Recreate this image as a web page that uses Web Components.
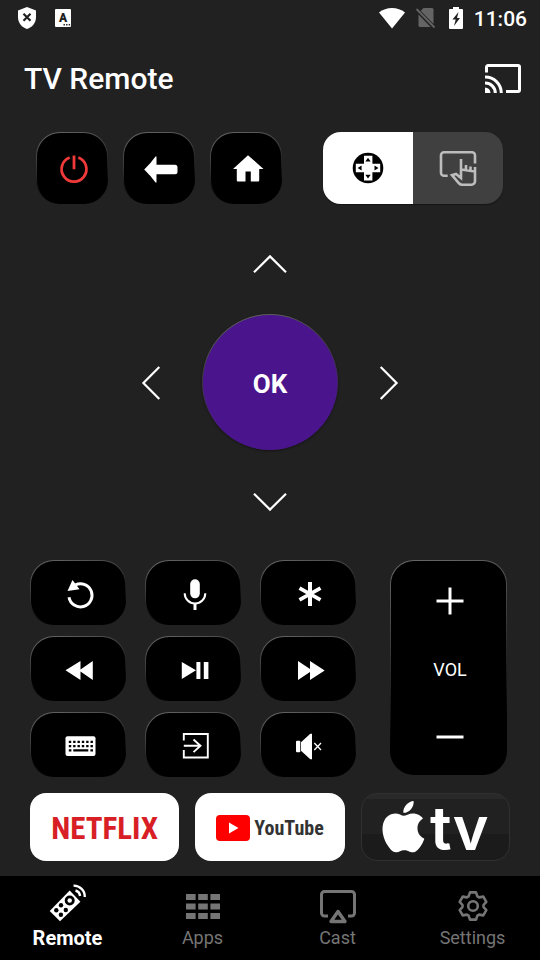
<!DOCTYPE html>
<html lang="en">
<head>
<meta charset="utf-8">
<meta name="viewport" content="width=device-width, initial-scale=1">
<title>TV Remote</title>
<style>
  body { margin: 0; background: #212121; color: #fff; font-family: Roboto, "Liberation Sans", sans-serif; }
</style>
</head>
<body>
<remote-app></remote-app>
<script>
const gear = () => {
  const tooth = [[-4.4, -9.6], [-3, -13.6], [3, -13.6], [4.4, -9.6]];
  const pts = [];
  for (let i = 0; i < 6; i++) {
    const a = i * Math.PI / 3, c = Math.cos(a), s = Math.sin(a);
    for (const [x, y] of tooth) pts.push(`${(16 + x * c - y * s).toFixed(1)} ${(16 + x * s + y * c).toFixed(1)}`);
  }
  return `M${pts.join('L')}Z`;
};

/* name: [width, height, markup] */
const ICONS = {
  shield: [18, 22, '<path fill="currentColor" d="M9 0 18 3.500V10c0 6-4 10.500-9 12-5-1.500-9-6-9-12V3.500z"/><path d="M5.500 6.800l7 7m0-7-7 7" stroke="#212121" stroke-width="2.200"/>'],
  keyboardLang: [16, 18, '<rect width="16" height="18" rx="1" fill="currentColor"/><text x="8" y="13" text-anchor="middle" font-family="Roboto" font-weight="900" font-size="12" fill="#212121">A</text><path d="M8.500 15.800h7" stroke="#212121" stroke-width="1.400" stroke-dasharray="1.400 1.200"/>'],
  wifi: [26, 20, '<path fill="currentColor" d="M0 4.500C7-1.500 19-1.500 26 4.500L13 20.500z"/>'],
  noSim: [22, 20, '<path fill="#646464" d="M7.500 0H16a1.500 1.500 0 0 1 1.500 1.500V19H4a1.500 1.500 0 0 1-1.500-1.500V5z"/><path d="M.5 1.500 18.500 20" stroke="#212121" stroke-width="4"/><path d="M.5 1 18.500 19.500" stroke="#646464" stroke-width="1.800"/>'],
  battery: [14, 22, '<path fill="currentColor" d="M4 0h6v2h3a1 1 0 0 1 1 1v18a1 1 0 0 1-1 1H1a1 1 0 0 1-1-1V3a1 1 0 0 1 1-1h3z"/><path fill="#212121" d="M9.500 5 3.500 12.500h3.200L5 19l6-8H8z"/>'],
  screencast: [36, 29, '<path d="M1.500 8.500V3a1.500 1.500 0 0 1 1.500-1.500h30A1.500 1.500 0 0 1 34.500 3v23a1.500 1.500 0 0 1-1.500 1.500H21M0 13a16 16 0 0 1 16.300 16M0 19a10 10 0 0 1 10.300 10" fill="none" stroke="currentColor" stroke-width="3"/><path fill="currentColor" d="M0 23.500A5.500 5.500 0 0 1 5.500 29H0z"/>'],
  power: [36, 36, '<path d="M13.700 6.500a12.400 12.400 0 1 0 8.600 0M18 4.500V18.300" fill="none" stroke="#f03a3a" stroke-width="2.800"/>'],
  back: [36, 36, '<path fill="currentColor" d="M1.200 18.500Q8 12 12.500 5.500h1v8.300h18.500a2.500 2.500 0 0 1 2.500 2.500v4.400a2.500 2.500 0 0 1-2.500 2.500H13.500v8.300h-1Q8 25 1.200 18.500z"/>'],
  home: [36, 36, '<path fill="currentColor" d="M18 4.200 33.500 18H29.200v11.500a1 1 0 0 1-1 1h-7.400v-10h-5.300v10H7.800a1 1 0 0 1-1-1V18H3z"/>'],
  gamepad: [36, 36, '<circle cx="18" cy="18" r="15.300" fill="#000"/><path fill="#fff" d="M14 5.700h8.400v8h7.800v8.600h-7.800v8.200H14v-8.200H5.800v-8.600H14z"/><path fill="#000" d="M18 7.700l2.700 3.800h-5.400zM18 28.500l2.700-3.800h-5.400zM7.600 18l4-2.600v5.200zM28.500 18l-4-2.600v5.200z"/>'],
  touch: [36, 36, '<path d="M35 13.500V5.300a3 3 0 0 0-3-3H4a3 3 0 0 0-3 3v17.400a3 3 0 0 0 3 3h3.700M21 9v19l-5-4-4 1.200 7.200 8.300a4 4 0 0 0 2.800 1.200h9.500a3.500 3.500 0 0 0 3.500-3.500V17M21 19.500l14 2M26 15v4.500M30.500 16.500v4" fill="none" stroke="currentColor" stroke-width="2.600"/>'],
  up: [34, 18, '<path d="M1 17.300 17 1.400 33 17.300" fill="none" stroke="currentColor" stroke-width="2.200"/>'],
  down: [34, 18, '<path d="M1 .7 17 16.600 33 .7" fill="none" stroke="currentColor" stroke-width="2.200"/>'],
  left: [18, 34, '<path d="M17.300 1 1.400 17l15.900 16" fill="none" stroke="currentColor" stroke-width="2.200"/>'],
  right: [18, 34, '<path d="M.7 1l15.900 16L.7 33" fill="none" stroke="currentColor" stroke-width="2.200"/>'],
  replay: [36, 36, '<path d="M13.500 8.800A11.600 11.600 0 1 1 7 21.300" fill="none" stroke="currentColor" stroke-width="3"/><path fill="currentColor" d="M10.500 4 17.500 13.300 5.500 15z"/>'],
  mic: [36, 36, '<rect x="13.200" y="3.300" width="9.600" height="19" rx="4.800" fill="currentColor"/><path d="M7.700 17.300a10.300 10.300 0 0 0 20.600 0" fill="none" stroke="currentColor" stroke-width="2"/><path d="M18 27.500V34" stroke="currentColor" stroke-width="3"/>'],
  star: [36, 36, '<path d="M18 6v24" stroke="currentColor" stroke-width="4"/><path d="M7.500 12.200l21 11.600m0-11.600-21 11.600" stroke="currentColor" stroke-width="3.800"/>'],
  rewind: [36, 36, '<path fill="currentColor" d="M3.500 18.300 18.500 9v8.500L30.800 9v19L18.500 19.500V28z"/>'],
  playPause: [36, 36, '<path fill="currentColor" d="M4.800 10 19 18.300 4.800 27zM19.400 10h4v17h-4zM26.800 10h4.600v17h-4.600z"/>'],
  forward: [36, 36, '<path fill="currentColor" d="M32.700 18.500 18 9v8L6 9v19l12-8v8z"/>'],
  keyboard: [36, 36, '<rect x="3.500" y="8.300" width="30" height="19.700" rx="2" fill="currentColor"/><path d="M6.800 13.800h24.200M6.800 18.200h24.200" stroke="#000" stroke-width="2.200" stroke-dasharray="2.400 1.940"/><path d="M6.800 22.400h2.600M11.300 22.400h15M28.400 22.400H31" stroke="#000" stroke-width="2.200"/>'],
  input: [36, 36, '<path d="M6.800 12.500V6h24v23.500h-24V22M6.800 17.800h17M16.500 11.500l7 6.300-7 6.300" fill="none" stroke="currentColor" stroke-width="1.900"/>'],
  mute: [36, 36, '<rect x="4" y="12.700" width="4.300" height="11.500" rx="1" fill="currentColor"/><path fill="currentColor" d="M9 14.200 18.300 5.700H20v25.600h-1.700L9 22.700z"/><path d="M22.300 15l6.700 7m0-7-6.700 7" stroke="currentColor" stroke-width="1.300"/>'],
  plus: [28, 28, '<path d="M14 .5v27M.5 14h27" stroke="currentColor" stroke-width="3"/>'],
  minus: [28, 28, '<path d="M.5 14h27" stroke="currentColor" stroke-width="3"/>'],
  youtube: [34, 26, '<rect width="34" height="26" rx="4" fill="#f00"/><path fill="#fff" d="M13 7.500 22.500 13 13 18.500z"/>'],
  apple: [44, 55, '<path fill="currentColor" transform="scale(2.140) translate(-2 0)" d="M12.152 6.896c-.948 0-2.415-1.078-3.960-1.040-2.040.027-3.910 1.183-4.961 3.014-2.117 3.675-.546 9.103 1.519 12.090 1.013 1.454 2.208 3.090 3.792 3.039 1.520-.065 2.090-.987 3.935-.987 1.831 0 2.350.987 3.960.948 1.637-.026 2.676-1.480 3.676-2.948 1.156-1.688 1.636-3.325 1.662-3.415-.039-.013-3.182-1.221-3.220-4.857-.026-3.040 2.480-4.494 2.597-4.559-1.429-2.090-3.623-2.324-4.390-2.376-2-.156-3.675 1.090-4.610 1.090zM15.530 3.830c.843-1.012 1.400-2.427 1.245-3.830-1.207.052-2.662.805-3.532 1.818-.780.896-1.454 2.338-1.273 3.714 1.338.104 2.715-.688 3.559-1.701"/>'],
  remote: [40, 40, '<path fill="currentColor" d="M1.700 28 21.700 7.400 32.400 18.700 12 38.300z"/><g fill="#000"><circle cx="21.700" cy="17.500" r="5"/><circle cx="13" cy="22.300" r="2.200"/><circle cx="17.800" cy="27" r="2.200"/><circle cx="8.300" cy="27.300" r="2.200"/><circle cx="12.900" cy="31.700" r="2.200"/></g><circle cx="21.700" cy="17.500" r="2.200" fill="currentColor"/><path d="M25.500 2.600A11 11 0 0 1 36.800 14M27.500 7.500a6.500 6.500 0 0 1 4.600 5.500" fill="none" stroke="currentColor" stroke-width="2.400"/>'],
  apps: [34, 25, '<path d="M0 3h34M0 12.500h34M0 22h34" stroke="currentColor" stroke-width="6" stroke-dasharray="9.600 2.600"/>'],
  airplay: [36, 33, '<path d="M8 26H4.500a3 3 0 0 1-3-3V4.500a3 3 0 0 1 3-3h27a3 3 0 0 1 3 3V23a3 3 0 0 1-3 3H28" fill="none" stroke="currentColor" stroke-width="3"/><path d="M18 21.500 25 31.500H11z" fill="none" stroke="currentColor" stroke-width="3.400" stroke-linejoin="round"/>'],
  settings: [32, 32, `<path d="${gear()}" fill="none" stroke="currentColor" stroke-width="2.600" stroke-linejoin="round"/><circle cx="16" cy="16" r="4.800" fill="none" stroke="currentColor" stroke-width="2.600"/>`],
};

const define = (name, render) => customElements.define(name, class extends HTMLElement {
  constructor() {
    super();
    this.attachShadow({ mode: 'open' });
  }
  connectedCallback() {
    this.shadowRoot.innerHTML = render(this);
  }
});
const reset = `button, a { box-sizing: border-box; margin: 0; padding: 0; border: 0; background: none;
  color: inherit; font: inherit; text-decoration: none; cursor: pointer; display: flex; align-items: center; justify-content: center; }`;
const raised = color => `border: 1px solid transparent;
  background: linear-gradient(${color}, ${color}) padding-box, linear-gradient(165deg, #6a6a6a, #3c3c3c 35%, ${color} 75%) border-box;`;

define('ui-icon', el => {
  const [w, h, body] = ICONS[el.getAttribute('name')];
  return `<style>:host { display: block; flex: none; } svg { display: block; overflow: visible; }</style>
    <svg width="${w}" height="${h}" viewBox="0 0 ${w} ${h}" aria-hidden="true">${body}</svg>`;
});

define('status-bar', () => `<style>
    :host { display: flex; align-items: center; justify-content: space-between; height: 36px; padding: 0 13px 0 18px; }
    div { display: flex; align-items: center; }
    .alerts { gap: 19px; }
    .system { gap: 11px; }
    span { font-size: 21px; line-height: 24px; font-weight: 500; padding-top: 2px; }
  </style>
  <div class="alerts"><ui-icon name="shield"></ui-icon><ui-icon name="keyboardLang"></ui-icon></div>
  <div class="system"><ui-icon name="wifi"></ui-icon><ui-icon name="noSim"></ui-icon><ui-icon name="battery"></ui-icon><span>11:06</span></div>`);

define('app-header', () => `<style>${reset}
    :host { display: flex; align-items: center; justify-content: space-between; height: 84px; padding: 0 19px 0 24px; }
    h1 { margin: 0; padding-top: 2px; font-size: 30px; line-height: 36px; font-weight: 500; }
  </style>
  <h1><slot></slot></h1>
  <button aria-label="Cast screen"><ui-icon name="screencast"></ui-icon></button>`);

define('remote-key', el => `<style>${reset}
    :host { display: block; }
    button { width: 100%; height: 100%; padding: 2px 0 0 3px; border-radius: 24px; ${raised('#000')} }
  </style>
  <button aria-label="${el.getAttribute('label')}"><ui-icon name="${el.getAttribute('icon')}"></ui-icon></button>`);

define('mode-switch', () => `<style>${reset}
    :host { display: grid; grid-template-columns: 1fr 1fr; width: 180px; border-radius: 18px; overflow: hidden; background: #404040; color: #bdbdbd; box-shadow: 0 1px 1px #151515; }
    [aria-pressed=true] { background: #fff; }
  </style>
  <button aria-label="Direction pad" aria-pressed="true"><ui-icon name="gamepad"></ui-icon></button>
  <button aria-label="Touch pad" aria-pressed="false"><ui-icon name="touch"></ui-icon></button>`);

define('direction-pad', () => `<style>${reset}
    :host { display: grid; grid-template: "a up b" 48px "left ok right" 136px "c down d" 48px / 48px 136px 48px; gap: 27px; justify-content: center; }
    button { padding-top: 2px; }
    .up { grid-area: up; } .down { grid-area: down; } .left { grid-area: left; } .right { grid-area: right; }
    .ok { grid-area: ok; border-radius: 50%; padding-top: 4px; font-size: 26px; font-weight: 700; ${raised('#4a148c')} box-shadow: 0 1px 2px #141414; }
  </style>
  <button class="up" aria-label="Up"><ui-icon name="up"></ui-icon></button>
  <button class="left" aria-label="Left"><ui-icon name="left"></ui-icon></button>
  <button class="ok">OK</button>
  <button class="right" aria-label="Right"><ui-icon name="right"></ui-icon></button>
  <button class="down" aria-label="Down"><ui-icon name="down"></ui-icon></button>`);

define('volume-rocker', () => `<style>${reset}
    :host { box-sizing: border-box; display: flex; flex-direction: column; justify-content: space-between; align-items: center; padding: 16px 0 13px 3px; border-radius: 24px; ${raised('#000')} }
    button { width: 72px; height: 48px; }
    span { font-size: 18px; line-height: 24px; padding-top: 2px; }
  </style>
  <button aria-label="Volume up"><ui-icon name="plus"></ui-icon></button>
  <span>VOL</span>
  <button aria-label="Volume down"><ui-icon name="minus"></ui-icon></button>`);

define('app-shortcut', el => `<style>${reset}
    :host { display: block; height: 68px; }
    button { width: 100%; height: 100%; padding-top: 2px; border-radius: 16px; background: #fff; white-space: nowrap; font-family: "Roboto Condensed", Roboto, sans-serif; font-weight: 700; }
    :host([brand=netflix]) button { color: #d81f26; font-size: 31px; }
    :host([brand=youtube]) button { color: #333; font-size: 20px; gap: 4px; }
    :host([brand=apple]) button { gap: 4px; color: #fff; font: 600 61px/62px Inter, sans-serif; border: 1px solid #303030;
      background: linear-gradient(#292929 0 7%, #212121 7% 60%, #1b1b1b 60%); }
  </style>
  <button aria-label="${el.getAttribute('label')}"><slot></slot></button>`);

define('tab-item', el => `<style>${reset}
    :host { display: block; color: #757575; font-size: 18px; }
    a { flex-direction: column; justify-content: flex-start; height: 84px; }
    .icon { height: 40px; display: flex; align-items: center; padding-top: 10px; }
    span { line-height: 24px; }
    :host([current]) { color: #fff; font-size: 20px; font-weight: 700; }
    :host([current]) .icon { padding-top: 4px; height: 46px; }
  </style>
  <a href="#${el.getAttribute('icon')}"><div class="icon"><ui-icon name="${el.getAttribute('icon')}"></ui-icon></div><span><slot></slot></span></a>`);

define('tab-bar', () => `<style>:host { display: grid; grid-template-columns: repeat(4, 1fr); background: #000; }</style><slot></slot>`);

define('remote-app', () => `<style>
    :host { display: flex; flex-direction: column; min-height: 100vh; }
    main { flex: 1; display: flex; flex-direction: column; padding: 12px 30px 15px; }
    .top { display: flex; justify-content: space-between; padding: 0 7px 0 6px; height: 72px; }
    .group { display: flex; gap: 15px; }
    .group remote-key { width: 72px; }
    direction-pad { margin: 35px 0; }
    .keys { display: grid; grid-template-columns: 96fr 96fr 96fr 132fr; grid-auto-rows: 65px; column-gap: 19px; row-gap: 11px; padding-right: 3px; }
    volume-rocker { grid-area: 1 / 4 / 4 / 5; margin: 0 0 2px 15px; }
    .shortcuts { display: grid; grid-template-columns: repeat(3, 1fr); gap: 16px; margin-top: 16px; }
  </style>
  <status-bar></status-bar>
  <app-header>TV Remote</app-header>
  <main>
    <div class="top">
      <div class="group">
        <remote-key icon="power" label="Power"></remote-key>
        <remote-key icon="back" label="Back"></remote-key>
        <remote-key icon="home" label="Home"></remote-key>
      </div>
      <mode-switch></mode-switch>
    </div>
    <direction-pad></direction-pad>
    <div class="keys">
      <remote-key icon="replay" label="Replay"></remote-key>
      <remote-key icon="mic" label="Voice"></remote-key>
      <remote-key icon="star" label="Options"></remote-key>
      <volume-rocker></volume-rocker>
      <remote-key icon="rewind" label="Rewind"></remote-key>
      <remote-key icon="playPause" label="Play or pause"></remote-key>
      <remote-key icon="forward" label="Fast forward"></remote-key>
      <remote-key icon="keyboard" label="Keyboard"></remote-key>
      <remote-key icon="input" label="Input source"></remote-key>
      <remote-key icon="mute" label="Mute"></remote-key>
    </div>
    <div class="shortcuts">
      <app-shortcut brand="netflix" label="Netflix">NETFLIX</app-shortcut>
      <app-shortcut brand="youtube" label="YouTube"><ui-icon name="youtube"></ui-icon>YouTube</app-shortcut>
      <app-shortcut brand="apple" label="Apple TV"><ui-icon name="apple"></ui-icon>tv</app-shortcut>
    </div>
  </main>
  <tab-bar>
    <tab-item icon="remote" current>Remote</tab-item>
    <tab-item icon="apps">Apps</tab-item>
    <tab-item icon="airplay">Cast</tab-item>
    <tab-item icon="settings">Settings</tab-item>
  </tab-bar>`);
</script>
</body>
</html>
